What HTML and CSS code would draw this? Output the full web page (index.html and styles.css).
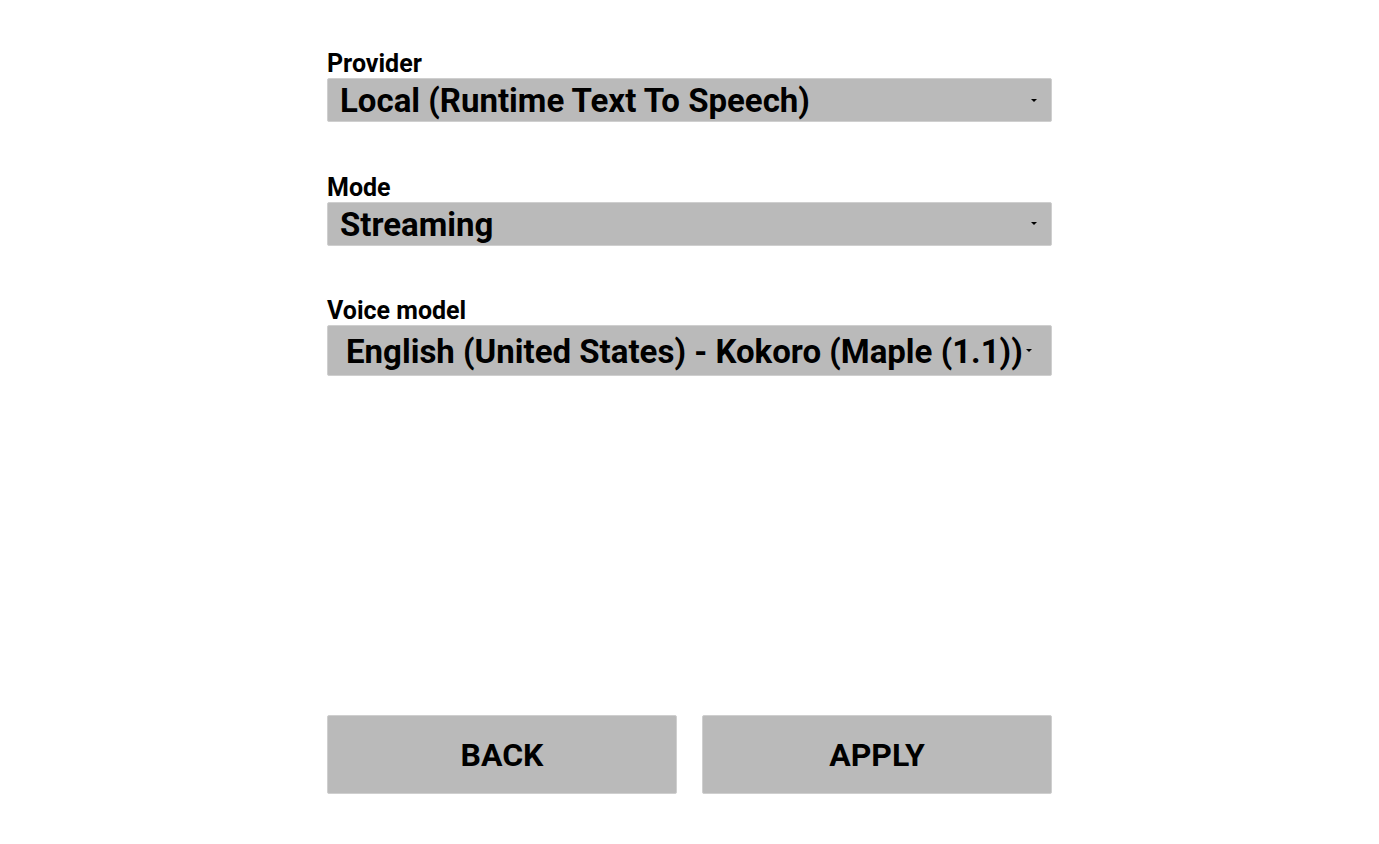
FILE: index.html
```html
<!DOCTYPE html>
<html>
<head>
<meta charset="utf-8">
<link rel="stylesheet" href="styles.css">
</head>
<body>
<div class="page">
  <div class="form">
    <div class="field">
      <div class="label">Provider</div>
      <div class="select">
        <span class="value">Local (Runtime Text To Speech)</span>
        <span class="arrow"></span>
      </div>
    </div>
    <div class="field">
      <div class="label">Mode</div>
      <div class="select">
        <span class="value">Streaming</span>
        <span class="arrow"></span>
      </div>
    </div>
    <div class="field">
      <div class="label">Voice model</div>
      <div class="select select-tall">
        <span class="value">English (United States) - Kokoro (Maple (1.1))</span>
        <span class="arrow"></span>
      </div>
    </div>
  </div>
  <div class="buttons">
    <div class="button">BACK</div>
    <div class="button">APPLY</div>
  </div>
</div>
</body>
</html>
```
FILE: styles.css
```css
html, body {
  margin: 0;
  padding: 0;
  background: #ffffff;
}
body {
  font-family: Roboto, "Liberation Sans", sans-serif;
  font-weight: 700;
  color: #000;
}
.page {
  width: 725px;
  height: 844px;
  margin: 0 auto;
  display: flex;
  flex-direction: column;
  box-sizing: border-box;
  padding-top: 48px;
}
.form {
  display: flex;
  flex-direction: column;
  gap: 49.5px;
}
.field {
  display: flex;
  flex-direction: column;
}
.label {
  font-size: 25px;
  line-height: 30px;
  padding-top: 1px;
  margin-bottom: -1px;
}
.select {
  height: 44px;
  background: #bababa;
  border: 1px solid #cfcfcf;
  border-radius: 2px;
  box-sizing: border-box;
  display: flex;
  align-items: center;
  padding-left: 12px;
  padding-right: 14px;
}
.select-tall {
  height: 51px;
  padding-left: 18px;
  padding-right: 19px;
}
.value {
  flex: 1;
  font-size: 33px;
  line-height: 40px;
  padding-top: 2px;
  white-space: nowrap;
}
.arrow {
  width: 0;
  height: 0;
  border-left: 3px solid transparent;
  border-right: 3px solid transparent;
  border-top: 3px solid #000;
  flex: none;
}
.buttons {
  margin-top: auto;
  margin-bottom: 50px;
  display: flex;
  gap: 25px;
}
.button {
  flex: 1;
  height: 79px;
  background: #bababa;
  border: 1px solid #cfcfcf;
  border-radius: 2px;
  box-sizing: border-box;
  display: flex;
  align-items: center;
  justify-content: center;
  font-size: 32px;
}
```
